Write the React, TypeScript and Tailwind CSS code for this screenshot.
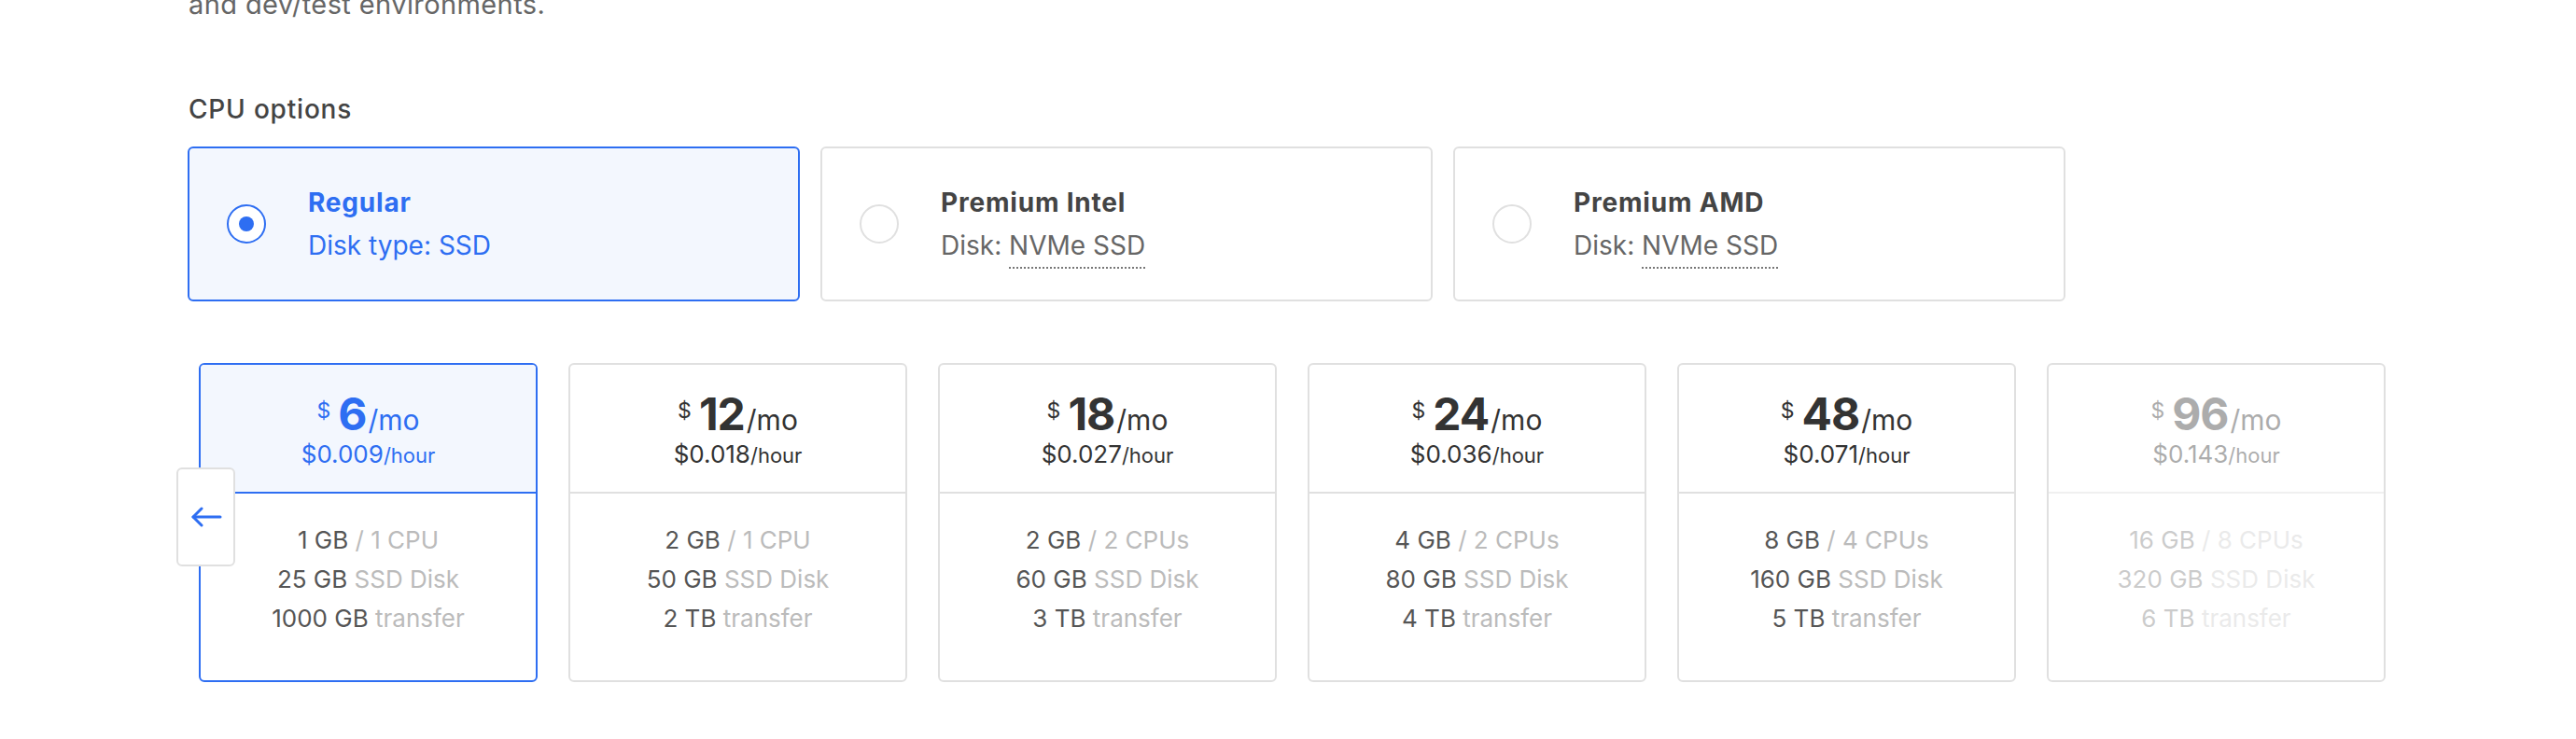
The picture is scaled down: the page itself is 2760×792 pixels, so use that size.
import React from 'react';

interface Plan {
  price: number;
  hour: string;
  ram: string;
  cpu: string;
  disk: string;
  transfer: string;
  selected?: boolean;
  faded?: boolean;
}

const plans: Plan[] = [
  { price: 6, hour: '0.009', ram: '1 GB', cpu: '1 CPU', disk: '25 GB', transfer: '1000 GB', selected: true },
  { price: 12, hour: '0.018', ram: '2 GB', cpu: '1 CPU', disk: '50 GB', transfer: '2 TB' },
  { price: 18, hour: '0.027', ram: '2 GB', cpu: '2 CPUs', disk: '60 GB', transfer: '3 TB' },
  { price: 24, hour: '0.036', ram: '4 GB', cpu: '2 CPUs', disk: '80 GB', transfer: '4 TB' },
  { price: 48, hour: '0.071', ram: '8 GB', cpu: '4 CPUs', disk: '160 GB', transfer: '5 TB' },
  { price: 96, hour: '0.143', ram: '16 GB', cpu: '8 CPUs', disk: '320 GB', transfer: '6 TB', faded: true },
];

const cpuOptions = [
  { name: 'Regular', label: 'Disk type:', disk: 'SSD', selected: true },
  { name: 'Premium Intel', label: 'Disk:', disk: 'NVMe SSD' },
  { name: 'Premium AMD', label: 'Disk:', disk: 'NVMe SSD' },
];

function CpuCard({ opt }: { opt: (typeof cpuOptions)[number] }) {
  const sel = !!opt.selected;
  return (
    <div
      className={`w-[656px] h-[166px] rounded-[6px] border-2 flex items-center pl-[40px] ${
        sel ? 'border-[#2e6ef2] bg-[#f3f7fe]' : 'border-[#e0e0e0] bg-white'
      }`}
    >
      <div
        className={`w-[42px] h-[42px] rounded-full border-2 bg-white flex items-center justify-center shrink-0 ${
          sel ? 'border-[#2e6ef2]' : 'border-[#e0e0e0]'
        }`}
      >
        {sel && <div className="w-[16px] h-[16px] rounded-full bg-[#2e6ef2]" />}
      </div>
      <div className="ml-[45px] text-[28px] leading-[46px]">
        <div className={`font-bold tracking-[0.8px] ${sel ? 'text-[#2e6ef2]' : 'text-[#444]'}`}>{opt.name}</div>
        <div className={sel ? 'text-[#2e6ef2]' : 'text-[#666]'}>
          {opt.label}{' '}
          {sel ? (
            opt.disk
          ) : (
            <span className="border-b-2 border-dotted border-[#777] pb-[6px]">{opt.disk}</span>
          )}
        </div>
      </div>
    </div>
  );
}

function PlanCard({ p }: { p: Plan }) {
  const sel = !!p.selected;
  const main = sel ? 'text-[#2e6ef2]' : 'text-[#333]';
  return (
    <div
      className={`w-[363px] h-[342px] rounded-[6px] border-2 flex flex-col overflow-hidden bg-white ${
        sel ? 'border-[#2e6ef2]' : 'border-[#e0e0e0]'
      }`}
    >
      <div
        className={`h-[138px] pt-[29px] flex flex-col items-center border-b-2 ${
          sel ? 'bg-[#f3f7fe] border-[#2e6ef2]' : p.faded ? 'border-[#f0f0f0]' : 'border-[#e0e0e0]'
        } ${main}`}
      >
        <div className={`flex items-baseline leading-[48px] ${p.faded ? 'opacity-40' : ''}`}>
          <span className="text-[23px] relative -top-[13px]">$</span>
          <span className="text-[48px] font-bold ml-[8px] tracking-[-1px]">{p.price}</span>
          <span className="text-[30px] ml-[2px]">/mo</span>
        </div>
        <div className={`-mt-[7px] leading-[34px] ${p.faded ? 'opacity-40' : ''}`}>
          <span className="text-[26px]">${p.hour}</span>
          <span className="text-[22px]">/hour</span>
        </div>
      </div>
      <div className={`pt-[29px] text-center text-[26px] leading-[42px] text-[#555] ${p.faded ? 'opacity-30' : ''}`}>
        <div>
          {p.ram} <span className="text-[#bbb]">/ {p.cpu}</span>
        </div>
        <div>
          {p.disk} <span className="text-[#bbb]">SSD Disk</span>
        </div>
        <div>
          {p.transfer} <span className="text-[#bbb]">transfer</span>
        </div>
      </div>
    </div>
  );
}

export default function App() {
  return (
    <div
      className="w-[2760px] h-[792px] overflow-hidden bg-white pl-[201px]"
      style={{ fontFamily: 'Inter, "Open Sans", "Liberation Sans", sans-serif' }}
    >
      <p className="-mt-[15px] text-[29px] leading-[40px] tracking-[0.4px] text-[#666] pl-[1px]">and dev/test environments.</p>

      <h2 className="mt-[72px] text-[28px] leading-[40px] font-medium tracking-[0.8px] text-[#444] pl-[1px]">CPU options</h2>

      <div className="mt-[20px] flex gap-[22px]">
        {cpuOptions.map(o => (
          <CpuCard key={o.name} opt={o} />
        ))}
      </div>

      <div className="relative mt-[66px] ml-[12px] flex gap-[33px]">
        {plans.map(p => (
          <PlanCard key={p.price} p={p} />
        ))}
        <button className="absolute left-[-24px] top-[112px] w-[63px] h-[106px] rounded-[6px] border-2 border-[#e0e0e0] bg-white flex items-center justify-center">
          <svg width="34" height="22" viewBox="0 0 34 22" fill="none" stroke="#2e6ef2" strokeWidth="3" strokeLinecap="round" strokeLinejoin="round">
            <path d="M32 11H3" />
            <path d="M12 2L3 11L12 20" />
          </svg>
        </button>
      </div>
    </div>
  );
}
